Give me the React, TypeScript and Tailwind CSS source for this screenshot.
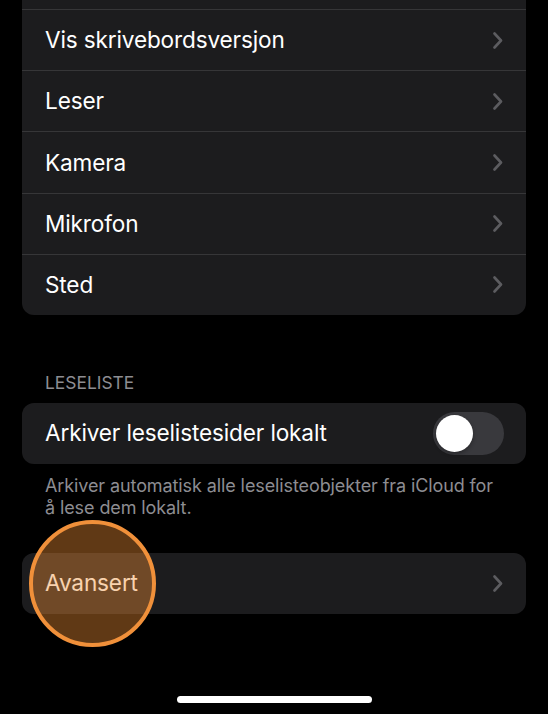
const rows = ["Vis skrivebordsversjon", "Leser", "Kamera", "Mikrofon", "Sted"]

function Chevron() {
  return (
    <svg width="10" height="17" viewBox="0 0 10 17" fill="none" className="shrink-0">
      <path d="M1.5 1.5L8 8.5L1.5 15.5" stroke="#5c5c60" strokeWidth="2.6" strokeLinecap="round" strokeLinejoin="round" />
    </svg>
  )
}

export default function App() {
  return (
    <div className="h-[714px] w-full overflow-hidden bg-black pl-[22px] pr-[22px] font-['Inter',sans-serif]">
      {/* list scrolled so the first row is just out of view */}
      <div className="rounded-b-[12px] bg-[#1c1c1e]">
        <div className="h-[9px]" />
        {rows.map((r) => (
          <div key={r} className="border-t border-[#363638]">
            <div className="ml-[23px] flex h-[60.2px] items-center justify-between pr-[23px]">
              <span className="text-[22.6px] tracking-[-0.15px] text-white">{r}</span>
              <Chevron />
            </div>
          </div>
        ))}
      </div>

      <div className="mt-[57px] pl-[23px] text-[17.4px] leading-[22px] text-[#8d8d92]">LESELISTE</div>

      <div className="mt-[9px] flex h-[61px] items-center justify-between rounded-[12px] bg-[#1c1c1e] pl-[23px] pr-[22px]">
        <span className="text-[22.6px] tracking-[-0.15px] text-white">Arkiver leselistesider lokalt</span>
        <div className="flex h-[43px] w-[71px] items-center rounded-full bg-[#39393d] px-[3px]">
          <div className="h-[37px] w-[37px] rounded-full bg-white shadow-[0_2px_4px_rgba(0,0,0,0.3)]" />
        </div>
      </div>

      <p className="mt-[11px] pl-[23px] pr-[25px] text-[18px] leading-[22px] tracking-[-0.1px] text-[#8d8d92]">
        Arkiver automatisk alle leselisteobjekter fra iCloud for å lese dem lokalt.
      </p>

      <div className="relative mt-[34px]">
        <div className="rounded-[12px] bg-[#1c1c1e]">
          <div className="ml-[23px] flex h-[61px] items-center justify-between pr-[23px]">
            <span className="text-[22.6px] tracking-[-0.15px] text-white">Avansert</span>
            <Chevron />
          </div>
        </div>
        {/* tap indicator */}
        <div className="pointer-events-none absolute left-[7px] top-[-33px] h-[127px] w-[127px] rounded-full border-[4px] border-[#f0903a] bg-[rgba(240,142,52,0.4)]" />
      </div>

      <div className="mx-auto mt-[82px] h-[7px] w-[195px] rounded-full bg-white" />
    </div>
  )
}
